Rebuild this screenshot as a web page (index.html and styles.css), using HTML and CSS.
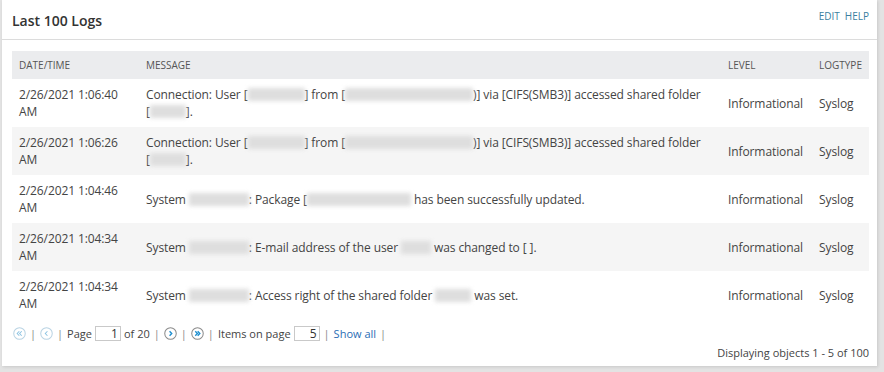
FILE: index.html
```html
<!DOCTYPE html>
<html lang="en">

<head>
    <meta charset="UTF-8">
    <meta name="viewport" content="width=device-width, initial-scale=1.0">
    <title>Last 100 Logs</title>
    <link rel="stylesheet" href="styles.css">
</head>

<body>
    <div class="widget">
        <header class="widget-head">
            <h1>Last 100 Logs</h1>
            <div class="head-links">
                <a href="#">EDIT</a>
                <a href="#">HELP</a>
            </div>
        </header>

        <div class="widget-body">
            <table class="logs">
                <colgroup>
                    <col class="c-date">
                    <col class="c-msg">
                    <col class="c-level">
                    <col class="c-type">
                </colgroup>
                <thead>
                    <tr>
                        <th>Date/Time</th>
                        <th>Message</th>
                        <th>Level</th>
                        <th>Logtype</th>
                    </tr>
                </thead>
                <tbody>
                    <tr>
                        <td class="top">2/26/2021 1:06:40 AM</td>
                        <td class="top">Connection: User [<span class="blur w57"></span>] from [<span class="blur w128"></span>)] via [CIFS(SMB3)] accessed shared folder <span class="nowrap">[<span class="blur w36"></span>].</span></td>
                        <td>Informational</td>
                        <td>Syslog</td>
                    </tr>
                    <tr>
                        <td class="top">2/26/2021 1:06:26 AM</td>
                        <td class="top">Connection: User [<span class="blur w57"></span>] from [<span class="blur w128"></span>)] via [CIFS(SMB3)] accessed shared folder <span class="nowrap">[<span class="blur w36"></span>].</span></td>
                        <td>Informational</td>
                        <td>Syslog</td>
                    </tr>
                    <tr>
                        <td class="top">2/26/2021 1:04:46 AM</td>
                        <td>System <span class="blur w60"></span>: Package [<span class="blur w104"></span> has been successfully updated.</td>
                        <td>Informational</td>
                        <td>Syslog</td>
                    </tr>
                    <tr>
                        <td class="top">2/26/2021 1:04:34 AM</td>
                        <td>System <span class="blur w60"></span>: E-mail address of the user <span class="blur w30"></span> was changed to [ ].</td>
                        <td>Informational</td>
                        <td>Syslog</td>
                    </tr>
                    <tr>
                        <td class="top">2/26/2021 1:04:34 AM</td>
                        <td>System <span class="blur w60"></span>: Access right of the shared folder <span class="blur w36"></span> was set.</td>
                        <td>Informational</td>
                        <td>Syslog</td>
                    </tr>
                </tbody>
            </table>

            <div class="pager">
                <svg class="pg-icon off" viewBox="0 0 14 14"><circle cx="7" cy="7" r="6.2"/><path d="M6.8 4.6 4.5 7l2.3 2.4M9.4 4.6 7.1 7l2.3 2.4"/></svg>
                <span class="sep">|</span>
                <svg class="pg-icon off" viewBox="0 0 14 14"><circle cx="7" cy="7" r="6.2"/><path d="M8 4.6 5.7 7 8 9.4"/></svg>
                <span class="sep">|</span>
                <span>Page</span>
                <input class="pg-input" type="text" value="1">
                <span>of 20</span>
                <span class="sep">|</span>
                <svg class="pg-icon on" viewBox="0 0 14 14"><circle cx="7" cy="7" r="6.2"/><path d="M6 4.6 8.3 7 6 9.4"/></svg>
                <span class="sep">|</span>
                <svg class="pg-icon on" viewBox="0 0 14 14"><circle cx="7" cy="7" r="6.2"/><path d="M4.6 4.6 6.9 7 4.6 9.4M7.2 4.6 9.5 7 7.2 9.4"/></svg>
                <span class="sep">|</span>
                <span>Items on page</span>
                <input class="pg-input" type="text" value="5">
                <span class="sep">|</span>
                <a href="#" class="show-all">Show all</a>
                <span class="sep">|</span>
            </div>

            <div class="summary">Displaying objects 1 - 5 of 100</div>
        </div>
    </div>
</body>
</html>
```

FILE: styles.css
```css
body {
    margin: 0;
    padding: 0 7px 6px 2px;
    background-color: #e3e3e3;
    font-family: 'Open Sans', 'Liberation Sans', sans-serif;
    color: #444;
}

.widget {
    background-color: white;
    height: 366px;
    box-shadow: 1px 1px 3px rgba(0, 0, 0, 0.12);
}

.widget-head {
    display: flex;
    justify-content: space-between;
    align-items: center;
    height: 39px;
    padding: 0 8px 0 10px;
    border-bottom: 1px solid #dcdcdc;
}

.widget-head h1 {
    margin: 2px 0 0;
    font-size: 14px;
    font-weight: 600;
    color: #333;
}

.head-links {
    display: flex;
    gap: 5px;
    margin-top: -7px;
}

.head-links a {
    font-size: 10px;
    color: #3a7f9f;
    text-decoration: none;
}

.widget-body {
    padding: 11px 6px 0 10px;
}

.logs {
    width: 857px;
    table-layout: fixed;
    border-collapse: collapse;
    font-size: 12px;
}

.c-date { width: 127px; }
.c-msg { width: 582px; }
.c-level { width: 91px; }
.c-type { width: 57px; }

.logs th {
    height: 28px;
    padding: 0 7px;
    background-color: #ebecee;
    font-size: 10px;
    font-weight: normal;
    text-transform: uppercase;
    text-align: left;
    color: #555;
}

.logs td {
    height: 48px;
    padding: 0 7px;
    line-height: 17px;
    vertical-align: middle;
    color: #444;
    letter-spacing: -0.1px;
}

.logs td.top {
    vertical-align: top;
    padding-top: 7px;
    padding-bottom: 0;
    box-sizing: border-box;
}

.logs tbody tr:nth-child(even) td {
    background-color: #f5f5f5;
}

.nowrap {
    white-space: nowrap;
}

.blur {
    display: inline-block;
    height: 13px;
    vertical-align: -2px;
    background-color: #dedede;
    filter: blur(2px);
}

.w30 { width: 30px; }
.w36 { width: 36px; }
.w57 { width: 57px; }
.w60 { width: 60px; }
.w104 { width: 104px; }
.w128 { width: 128px; }

.pager {
    display: flex;
    align-items: center;
    gap: 3px;
    margin-top: 6px;
    padding-left: 1px;
    height: 16px;
    font-size: 11px;
    color: #444;
}

.sep {
    color: #888;
    margin: 0 1px;
}

.pg-icon {
    width: 13px;
    height: 13px;
    fill: none;
    stroke-width: 1.1;
}

.pg-icon.off circle { stroke: #b9d3e3; }
.pg-icon.off path { stroke: #8cc3e2; }
.pg-icon.on circle { stroke: #8a8a8a; }
.pg-icon.on path { stroke: #1e8fd0; stroke-width: 1.5; }

.pg-input {
    width: 26px;
    height: 15px;
    box-sizing: border-box;
    padding: 0 2px;
    border: 1px solid #c9c9c9;
    font-family: inherit;
    font-size: 12px;
    color: #333;
    text-align: right;
    margin: 0;
}

.show-all {
    color: #2a6db5;
    text-decoration: none;
}

.summary {
    margin-top: 4px;
    text-align: right;
    padding-right: 2px;
    font-size: 11px;
    color: #444;
}
```
